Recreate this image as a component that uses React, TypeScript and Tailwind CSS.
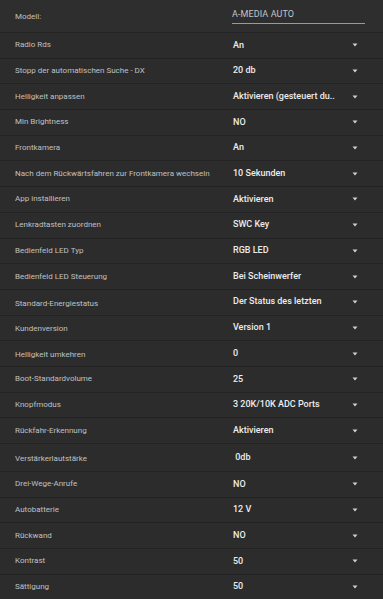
const rows: { label: string; value: string; tall?: boolean; shift?: boolean }[] = [
  { label: 'Radio Rds', value: 'An' },
  { label: 'Stopp der automatischen Suche - DX', value: '20 db' },
  { label: 'Helligkeit anpassen', value: 'Aktivieren (gesteuert du..' },
  { label: 'Min Brightness', value: 'NO' },
  { label: 'Frontkamera', value: 'An' },
  { label: 'Nach dem Rückwärtsfahren zur Frontkamera wechseln', value: '10 Sekunden' },
  { label: 'App installieren', value: 'Aktivieren' },
  { label: 'Lenkradtasten zuordnen', value: 'SWC Key' },
  { label: 'Bedienfeld LED Typ', value: 'RGB LED' },
  { label: 'Bedienfeld LED Steuerung', value: 'Bei Scheinwerfer' },
  { label: 'Standard-Energiestatus', value: 'Der Status des letzten', shift: true },
  { label: 'Kundenversion', value: 'Version 1', shift: true },
  { label: 'Helligkeit umkehren', value: '0', shift: true },
  { label: 'Boot-Standardvolume', value: '25' },
  { label: 'Knopfmodus', value: '3 20K/10K ADC Ports' },
  { label: 'Rückfahr-Erkennung', value: 'Aktivieren' },
  { label: 'Verstärkerlautstärke', value: ' 0db', tall: true, shift: true },
  { label: 'Drei-Wege-Anrufe', value: 'NO' },
  { label: 'Autobatterie', value: '12 V' },
  { label: 'Rückwand', value: 'NO' },
  { label: 'Kontrast', value: '50' },
  { label: 'Sättigung', value: '50' },
]

function Caret() {
  return (
    <svg width="6" height="4" viewBox="0 0 6 4" className="fill-[#d0d0d0]">
      <path d="M0.5 0.5h5L3 3.5z" />
    </svg>
  )
}

export default function App() {
  return (
    <div
      className="w-[383px] h-[599px] overflow-hidden bg-[#2c2c2c]"
      style={{ fontFamily: 'Roboto, "Liberation Sans", sans-serif' }}
    >
      {/* Model name input */}
      <div className="flex h-[33px] items-center border-b border-[#232323] bg-[#2e2e2e]">
        <div className="w-[232px] pl-[15px] pt-[2px] text-[8px] text-[#c0c0c0]">Modell:</div>
        <div className="mr-[18px] flex-1 border-b border-[#9a9a9a] pb-[1px] text-[9px] tracking-[0.1px] text-[#c4c4c4]">
          A-MEDIA AUTO
        </div>
      </div>

      {rows.map((r) => (
        <div
          key={r.label}
          className={`flex items-center border-b border-[#232323] ${r.tall ? 'h-[28px]' : 'h-[25.7px]'}`}
        >
          <div className={`w-[233px] truncate pl-[15px] text-[8px] text-[#c0c0c0] ${r.shift ? 'pt-[3px]' : ''}`}>
            {r.label}
          </div>
          <div className="flex-1 whitespace-pre text-[9px] font-medium text-[#ececec]">{r.value}</div>
          <div className="pr-[25px]">
            <Caret />
          </div>
        </div>
      ))}
    </div>
  )
}
